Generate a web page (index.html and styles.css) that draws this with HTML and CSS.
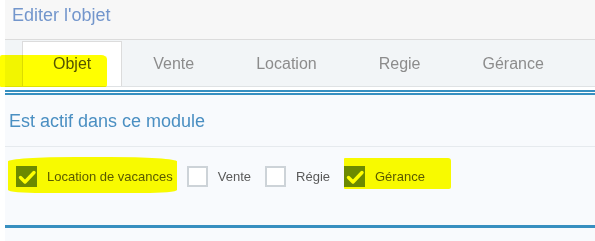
FILE: index.html
```html
<!DOCTYPE html>
<html lang="fr">
<head>
    <meta charset="UTF-8">
    <meta name="viewport" content="width=device-width, initial-scale=1.0">
    <title>Editer l'objet</title>
    <link rel="stylesheet" href="styles.css">
</head>
<body>
    <div class="panel">
        <!-- Header -->
        <div class="panel-head">Editer l'objet</div>

        <!-- Tabs -->
        <div class="tabs">
            <div class="tab active">Objet</div>
            <div class="tab">Vente</div>
            <div class="tab">Location</div>
            <div class="tab">Regie</div>
            <div class="tab">Gérance</div>
        </div>
        <div class="rule"></div>

        <!-- Modules -->
        <div class="section">
            <div class="section-title">Est actif dans ce module</div>
            <div class="checks">
                <label class="check">
                    <span class="box checked">
                        <svg viewBox="0 0 20 20" width="20" height="20"><path d="M3.5 10.5 L8 15 L17 5.5" fill="none" stroke="#fff" stroke-width="3.4" stroke-linecap="round" stroke-linejoin="round"/></svg>
                    </span>
                    <span class="label">Location de vacances</span>
                </label>
                <label class="check">
                    <span class="box"></span>
                    <span class="label">Vente</span>
                </label>
                <label class="check">
                    <span class="box"></span>
                    <span class="label">Régie</span>
                </label>
                <label class="check">
                    <span class="box checked">
                        <svg viewBox="0 0 20 20" width="20" height="20"><path d="M3.5 10.5 L8 15 L17 5.5" fill="none" stroke="#fff" stroke-width="3.4" stroke-linecap="round" stroke-linejoin="round"/></svg>
                    </span>
                    <span class="label">Gérance</span>
                </label>
            </div>
            <div class="bottom-rule"></div>
        </div>
    </div>

    <!-- Marker highlights drawn over the page -->
    <div class="marker marker-tab"></div>
    <div class="marker marker-location"></div>
    <div class="marker marker-gerance"></div>
</body>
</html>
```

FILE: styles.css
```css
body {
    margin: 0;
    background-color: #fff;
    font-family: "Liberation Sans", Arial, sans-serif;
    height: 241px;
    overflow: hidden;
}
.panel {
    margin-left: 5px;
    background-color: #fff;
}
.panel-head {
    height: 39px;
    line-height: 31px;
    padding-left: 7px;
    font-size: 18px;
    color: #7396cc;
    background-color: #f7f7f7;
    border-bottom: 1px solid #dcdcdc;
}
.tabs {
    display: flex;
    padding: 1px 0 0 17px;
    background-color: #f2f5f7;
    border-bottom: 1px solid #dfe2e4;
}
.tab {
    height: 45px;
    line-height: 44px;
    padding: 0 30px;
    font-size: 16px;
    color: #8c8c8c;
    border: 1px solid transparent;
    border-bottom: none;
    box-sizing: border-box;
}
.tab.active {
    background-color: #fff;
    color: #555;
    border-color: #dcdcdc;
}
.rule {
    margin-top: 3px;
    height: 1px;
    border-top: 2px solid #378fc0;
    border-bottom: 2px solid #378fc0;
}
.section {
    background-color: #f8fafd;
    padding-bottom: 13px;
}
.section-title {
    height: 51px;
    line-height: 52px;
    padding-left: 4px;
    font-size: 18px;
    color: #4a8fc2;
    border-bottom: 1px solid #e6eaee;
}
.checks {
    display: flex;
    align-items: center;
    padding: 19px 11px 38px;
}
.check {
    display: flex;
    align-items: center;
    margin-right: 14px;
}
.box {
    width: 21px;
    height: 21px;
    box-sizing: border-box;
    border: 2px solid #cdd3d8;
    background-color: #fff;
    display: flex;
    align-items: center;
    justify-content: center;
}
.box.checked {
    border: none;
    background-color: #6c8a9c;
}
.label {
    margin-left: 10px;
    font-size: 13px;
    color: #5a5a5a;
}
.bottom-rule {
    height: 3px;
    background-color: #378fc0;
}
.marker {
    position: absolute;
    background-color: #ffff00;
    mix-blend-mode: multiply;
}
.marker-tab {
    left: 0;
    top: 55px;
    width: 107px;
    height: 32px;
    border-radius: 2px 6px 3px 1px / 2px 4px 2px 1px;
}
.marker-location {
    left: 8px;
    top: 157px;
    width: 169px;
    height: 36px;
    border-radius: 40% 40% 20% 20% / 12% 12% 8% 8%;
}
.marker-gerance {
    left: 344px;
    top: 158px;
    width: 107px;
    height: 31px;
    border-radius: 1px 3px 2px 1px;
}
```
